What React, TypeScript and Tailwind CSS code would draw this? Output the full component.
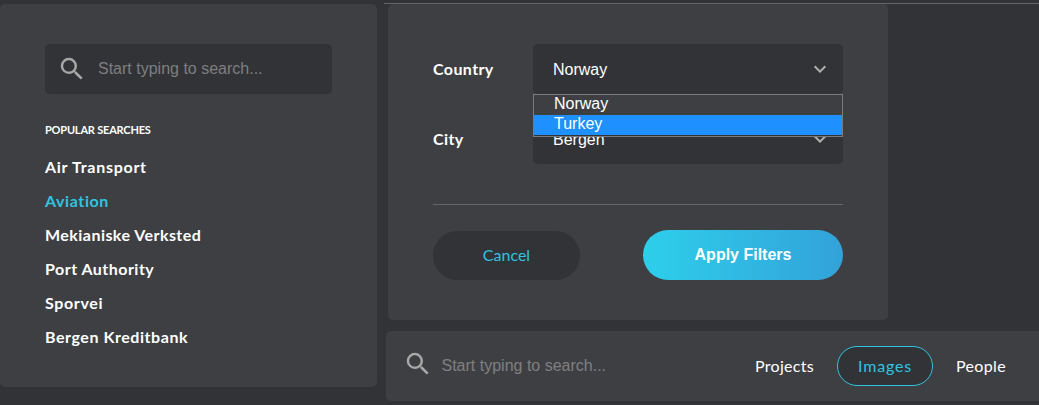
import type { ReactNode } from 'react';
import { MdKeyboardArrowDown, MdSearch } from 'react-icons/md';

const popular = [
  { name: 'Air Transport', style: 'text-white tracking-[0.72px]' },
  { name: 'Aviation', style: 'text-[#2fc4e2] tracking-[0.6px]' },
  { name: 'Mekianiske Verksted', style: 'text-white tracking-[0.45px]' },
  { name: 'Port Authority', style: 'text-white tracking-[0.48px]' },
  { name: 'Sporvei', style: 'text-white tracking-[0.65px]' },
  { name: 'Bergen Kreditbank', style: 'text-white tracking-[0.55px]' },
];

const arial = "font-['Liberation_Sans',Arial,sans-serif]";

function SelectRow({ label, value, children }: { label: string; value: string; children?: ReactNode }) {
  return (
    <div className="flex h-[50px] items-center">
      <span className="w-[100px] text-base font-bold tracking-[0.4px]">{label}</span>
      <div className={`relative flex h-full w-[310px] items-center justify-between rounded-[5px] bg-[#323336] pr-[11px] pl-5 text-base ${arial}`}>
        <span className="pt-0.5">{value}</span>
        <MdKeyboardArrowDown className="size-6 text-[#b0b0b0]" />
        {children}
      </div>
    </div>
  );
}

export default function App() {
  return (
    <div className="flex h-[405px] w-[1039px] overflow-hidden bg-[#323336] pt-[3px] font-['Lato',sans-serif] text-white">
      <aside className="mt-px mr-[7px] h-[383px] w-[377px] shrink-0 rounded-[5px] bg-[#3e3f43] px-[45px] pt-10">
        <div className="flex h-[50px] items-center rounded-[5px] bg-[#323336] pl-3">
          <MdSearch className="size-[30px] text-[#a8a8a8]" />
          <span className={`ml-[11px] text-base text-[#7e7f81] ${arial}`}>Start typing to search...</span>
        </div>
        <h2 className="mt-7 text-[11px] leading-4 font-bold tracking-[-0.2px]">POPULAR SEARCHES</h2>
        <ul className="mt-3">
          {popular.map((item) => (
            <li key={item.name} className={`h-[34px] text-base leading-[34px] font-bold ${item.style}`}>
              {item.name}
            </li>
          ))}
        </ul>
      </aside>

      <main className="w-[655px] border-t border-[#666764]">
        <section className="ml-1 h-[316px] w-[500px] rounded-[5px] bg-[#3e3f43] px-[45px] pt-10">
          <div className="flex flex-col gap-5">
            <SelectRow label="Country" value="Norway">
              <div className="absolute top-[50px] left-0 z-10 h-[43px] w-full border border-[#7b7b7b] bg-[#323336] leading-[18px]">
                <div className="h-5 bg-[#3e3f43] pl-5">Norway</div>
                <div className="h-5 bg-[#1e90ff] pl-5">Turkey</div>
              </div>
            </SelectRow>
            <SelectRow label="City" value="Bergen" />
          </div>
          <hr className="mt-10 border-[#656669]" />
          <div className="mt-[25px] flex h-[50px] items-end justify-between">
            <button className="h-[49px] w-[147px] rounded-full bg-[#323336] pb-0.5 text-base text-[#2fc4e2]">Cancel</button>
            <button className={`h-[50px] w-[200px] rounded-full bg-linear-to-r from-[#2dcfeb] to-[#32a2d9] text-base font-bold ${arial}`}>
              Apply Filters
            </button>
          </div>
        </section>

        <section className="mt-[11px] ml-0.5 flex h-[70px] items-center rounded-l-[5px] bg-[#3e3f43] pl-[17px]">
          <MdSearch className="mb-1 size-[30px] text-[#a8a8a8]" />
          <span className={`ml-[8.5px] text-base text-[#7e7f81] ${arial}`}>Start typing to search...</span>
          <nav className="ml-auto flex items-center pr-[33px] text-base">
            <span className="tracking-[0.3px]">Projects</span>
            <span className="mr-[23px] ml-[23px] flex h-10 w-24 items-center justify-center rounded-full border border-[#2fc4e2] bg-[#323336] tracking-[0.8px] text-[#2fc4e2]">
              Images
            </span>
            <span className="tracking-[0.35px]">People</span>
          </nav>
        </section>
      </main>
    </div>
  );
}
